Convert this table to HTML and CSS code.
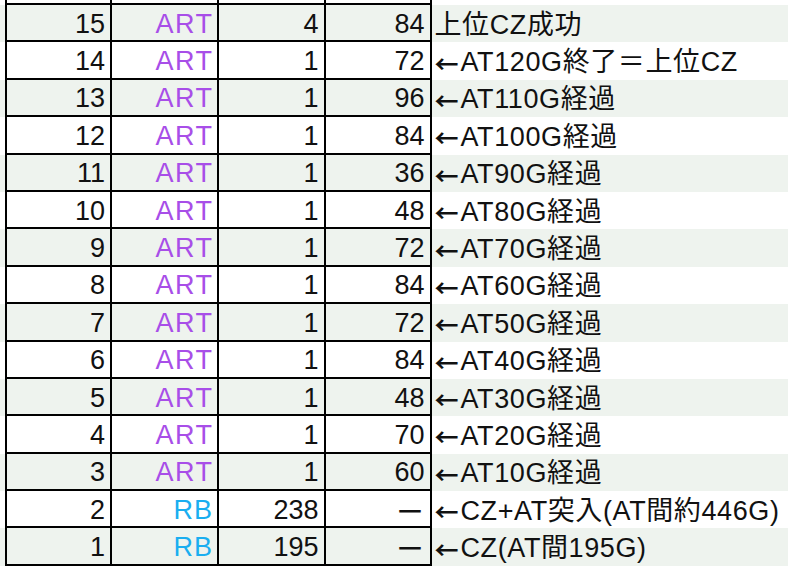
FILE: index.html
```html
<!DOCTYPE html>
<html lang="ja">
<head>
<meta charset="utf-8">
<link rel="stylesheet" href="styles.css">
</head>
<body>
<div class="sheet">
  <div class="row cut"><div class="c c1"></div><div class="c c2"></div><div class="c c3"></div><div class="c c4"></div><div class="note"></div></div>
  <div class="row alt"><div class="c c1">15</div><div class="c c2 art">ART</div><div class="c c3">4</div><div class="c c4">84</div><div class="note">上位CZ成功</div></div>
  <div class="row"><div class="c c1">14</div><div class="c c2 art">ART</div><div class="c c3">1</div><div class="c c4">72</div><div class="note"><span class="arrow">←</span>AT120G終了＝上位CZ</div></div>
  <div class="row alt"><div class="c c1">13</div><div class="c c2 art">ART</div><div class="c c3">1</div><div class="c c4">96</div><div class="note"><span class="arrow">←</span>AT110G経過</div></div>
  <div class="row"><div class="c c1">12</div><div class="c c2 art">ART</div><div class="c c3">1</div><div class="c c4">84</div><div class="note"><span class="arrow">←</span>AT100G経過</div></div>
  <div class="row alt"><div class="c c1">11</div><div class="c c2 art">ART</div><div class="c c3">1</div><div class="c c4">36</div><div class="note"><span class="arrow">←</span>AT90G経過</div></div>
  <div class="row"><div class="c c1">10</div><div class="c c2 art">ART</div><div class="c c3">1</div><div class="c c4">48</div><div class="note"><span class="arrow">←</span>AT80G経過</div></div>
  <div class="row alt"><div class="c c1">9</div><div class="c c2 art">ART</div><div class="c c3">1</div><div class="c c4">72</div><div class="note"><span class="arrow">←</span>AT70G経過</div></div>
  <div class="row"><div class="c c1">8</div><div class="c c2 art">ART</div><div class="c c3">1</div><div class="c c4">84</div><div class="note"><span class="arrow">←</span>AT60G経過</div></div>
  <div class="row alt"><div class="c c1">7</div><div class="c c2 art">ART</div><div class="c c3">1</div><div class="c c4">72</div><div class="note"><span class="arrow">←</span>AT50G経過</div></div>
  <div class="row"><div class="c c1">6</div><div class="c c2 art">ART</div><div class="c c3">1</div><div class="c c4">84</div><div class="note"><span class="arrow">←</span>AT40G経過</div></div>
  <div class="row alt"><div class="c c1">5</div><div class="c c2 art">ART</div><div class="c c3">1</div><div class="c c4">48</div><div class="note"><span class="arrow">←</span>AT30G経過</div></div>
  <div class="row"><div class="c c1">4</div><div class="c c2 art">ART</div><div class="c c3">1</div><div class="c c4">70</div><div class="note"><span class="arrow">←</span>AT20G経過</div></div>
  <div class="row alt"><div class="c c1">3</div><div class="c c2 art">ART</div><div class="c c3">1</div><div class="c c4">60</div><div class="note"><span class="arrow">←</span>AT10G経過</div></div>
  <div class="row"><div class="c c1">2</div><div class="c c2 rb">RB</div><div class="c c3">238</div><div class="c c4 dash">ー</div><div class="note"><span class="arrow">←</span>CZ+AT突入(AT間約446G)</div></div>
  <div class="row alt"><div class="c c1">1</div><div class="c c2 rb">RB</div><div class="c c3">195</div><div class="c c4 dash">ー</div><div class="note"><span class="arrow">←</span>CZ(AT間195G)</div></div>
</div>
</body>
</html>
```
FILE: styles.css
```css
html, body {
  margin: 0;
  padding: 0;
  background: #ffffff;
}
.sheet {
  width: 788px;
  font-family: "Liberation Sans", "Noto Sans CJK JP", sans-serif;
  font-size: 27px;
  color: #111;
}
.row {
  display: flex;
  height: 37.4px;
  padding-left: 5px;
  background: #ffffff;
}
.row.alt {
  background: #eef3ee;
}
.row.cut {
  height: 5px;
}
.c {
  box-sizing: border-box;
  height: 100%;
  border-right: 2px solid #000;
  border-bottom: 2px solid #000;
  padding-right: 5px;
  display: flex;
  align-items: center;
  justify-content: flex-end;
  padding-top: 3px;
  line-height: 1;
  white-space: nowrap;
}
.c1 {
  width: 107px;
  border-left: 2px solid #000;
}
.c2 { width: 107px; }
.c3 { width: 106.5px; }
.c4 { width: 106px; }
.art {
  color: #a84ee8;
  letter-spacing: 1.5px;
  padding-right: 3.5px;
}
.rb {
  color: #1aaef0;
  letter-spacing: 1px;
  padding-right: 4px;
}
.dash {
  font-family: "Noto Sans CJK JP", sans-serif;
  padding-right: 6px;
}
.note {
  flex: 1;
  display: flex;
  align-items: center;
  padding-left: 3px;
  padding-top: 3px;
  box-sizing: border-box;
  line-height: 1;
  white-space: nowrap;
  letter-spacing: 0.6px;
}
.arrow {
  font-family: "Noto Sans CJK JP", sans-serif;
  font-weight: 700;
  font-size: 24px;
  letter-spacing: 0;
  margin-right: 2px;
}
```
